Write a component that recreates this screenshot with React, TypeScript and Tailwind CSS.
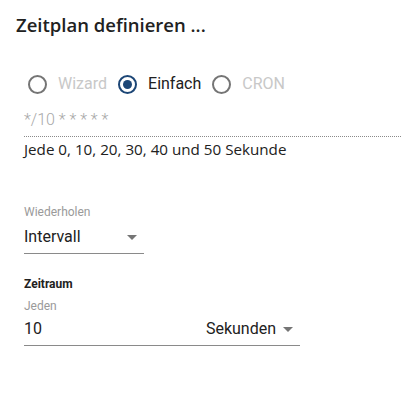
const radios = [
  { label: 'Wizard', checked: false },
  { label: 'Einfach', checked: true },
  { label: 'CRON', checked: false },
];

function Arrow() {
  return <span className="inline-block w-0 h-0 border-x-[5px] border-x-transparent border-t-[5px] border-t-[#757575]" />;
}

export default function App() {
  return (
    <div className="w-[401px] h-[394px] bg-white overflow-hidden font-['Roboto',sans-serif]">
      {/* Titel */}
      <h1 className="pl-4 pt-[13px] text-[18.5px] leading-[24px] font-semibold text-[#212121] font-['Open_Sans',sans-serif]">
        Zeitplan definieren ...
      </h1>

      {/* Modus */}
      <div className="flex items-center gap-[3px] pl-7 mt-[35px] h-6">
        {radios.map(({ label, checked }) => (
          <label key={label} className="flex items-center gap-[11px] mr-[8px]">
            <span
              className={`w-[19px] h-[19px] rounded-full border-2 flex items-center justify-center ${
                checked ? 'border-[#1c4676]' : 'border-[#757575]'
              }`}
            >
              {checked && <span className="w-[9px] h-[9px] rounded-full bg-[#1c4676]" />}
            </span>
            <span className={`text-[16px] ${checked ? 'text-[#212121]' : 'text-[#c8c8c8]'}`}>{label}</span>
          </label>
        ))}
      </div>

      {/* Ausdruck */}
      <div className="pl-6 mt-[11px]">
        <div className="text-[16px] font-light text-[#a8a8a8] leading-[26px] pb-[3px] border-b border-dotted border-[#8a8a8a]">
          */10 * * * * *
        </div>
        <p className="mt-[2px] text-[15.2px] leading-[20px] text-[#212121] font-['Open_Sans',sans-serif]">
          Jede 0, 10, 20, 30, 40 und 50 Sekunde
        </p>
      </div>

      {/* Wiederholen */}
      <div className="pl-6 mt-[46px]">
        <div className="text-[12px] leading-[14px] text-[#9a9a9a]">Wiederholen</div>
        <div className="w-[120px] mt-[7px] flex items-center justify-between h-[28px] pb-[5px] pr-[7px] border-b border-[#8a8a8a]">
          <span className="text-[16px] leading-[22px] text-[#212121]">Intervall</span>
          <Arrow />
        </div>
      </div>

      {/* Zeitraum */}
      <div className="pl-6 mt-[22px]">
        <div className="text-[12px] leading-[16px] font-bold text-[#212121]">Zeitraum</div>
        <div className="text-[12px] leading-[14px] mt-[7px] text-[#9a9a9a]">Jeden</div>
        <div className="w-[276px] mt-[5px] flex items-center justify-between h-[28px] pb-[5px] pr-[7px] border-b border-[#8a8a8a]">
          <span className="text-[16px] leading-[22px] text-[#212121]">10</span>
          <span className="flex items-center gap-[7px]">
            <span className="text-[16px] leading-[22px] text-[#212121]">Sekunden</span>
            <Arrow />
          </span>
        </div>
      </div>
    </div>
  );
}
